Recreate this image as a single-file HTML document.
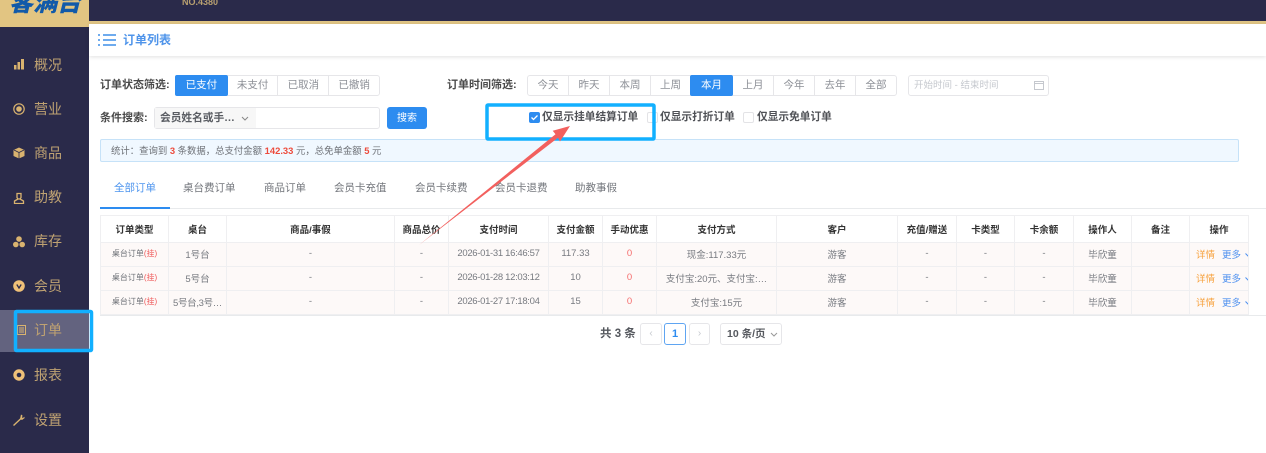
<!DOCTYPE html>
<html lang="zh"><head><meta charset="utf-8">
<style>
*{box-sizing:border-box}
html,body{margin:0;padding:0;width:1266px;height:453px;overflow:hidden;background:#fff;font-family:"Liberation Sans","Noto Sans CJK SC",sans-serif;color:#606266}
body{filter:blur(.3px)}
.a{position:absolute;white-space:nowrap}
#side{position:absolute;left:0;top:0;width:89px;height:453px;background:#2a2a4a}
#logo{position:absolute;left:0;top:0;width:89px;height:27px;background:#e2c582;overflow:hidden}
#logo span{position:absolute;left:9px;top:-14px;font:italic 900 24px/30px "Noto Sans CJK SC",sans-serif;color:#115aa9;white-space:nowrap}
#top{position:absolute;left:89px;top:0;width:1177px;height:24px;background:#2a2a4a;border-bottom:3px solid #e0c585}
.m{position:absolute;left:34px;font-size:14px;line-height:20px;color:#bfa272;white-space:nowrap}
.ic{position:absolute;left:13px;width:12px;height:12px}
#bar{position:absolute;left:89px;top:24px;width:1177px;height:32px;background:#fff;box-shadow:0 1px 4px rgba(0,0,0,.12)}
.lab{font-size:11px;font-weight:bold;color:#4a4a4a;line-height:16px}
.g{position:absolute;display:flex;height:21px;border:1px solid #e6e6e9;border-radius:3px;font-size:10.5px;line-height:19px;color:#8c8f96;background:#fff}
.g span{display:block;text-align:center;border-right:1px solid #e6e6e9}
.g span:last-child{border-right:0}
.g .on{background:#2d8cf0;color:#fff;margin:-1px 0 -1px -1px;line-height:21px;height:21px;border-radius:2px;border-right:0}
.chk{font-size:10.7px;line-height:16px;font-weight:bold;color:#4f5156}
.box{position:absolute;width:11px;height:11px;border:1px solid #e3e3e6;border-radius:2px;background:#fff}
.tab{position:absolute;top:181px;font-size:10.5px;line-height:15px;color:#72757b;white-space:nowrap}
table{position:absolute;left:100px;top:215px;width:1148px;border-collapse:collapse;table-layout:fixed;font-size:9.5px}
th,td{border:1px solid #efeff1;text-align:center;padding:0;overflow:hidden;white-space:nowrap}
th{height:27px;font-size:9.5px;color:#333;font-weight:bold;background:#fff}
td{height:24px;color:#777a80;background:#fdf9f8;padding-bottom:2px}
.sm{font-size:8px;color:#6f7278}
.sm b{font-weight:normal;color:#ef5a5a}
.r{color:#f56c6c}
.d{letter-spacing:-.32px}
.o{color:#f7a13c}.bl{color:#4d90ef;margin-left:7px}
.act{text-align:left;padding-left:6px}
.act svg{margin-left:4px;vertical-align:1px}
</style></head><body>
<div id="top"><span class="a" style="left:93px;top:-4px;font-size:9px;line-height:12px;font-weight:bold;color:#b8a070">NO.4380</span></div>
<div id="side">
<div id="logo"><span>客满台</span></div>
<div style="position:absolute;left:0;top:310px;width:89px;height:42px;background:#63637f"></div>
<svg class="ic" style="top:58px" viewBox="0 0 12 12"><path fill="#d9b36f" d="M1 7h2.500v4.500H1zM4.500 4h2.500v7.500H4.500zM8 1h3v10.500H8z"/></svg>
<div class="m" style="top:55px">概况</div>
<svg class="ic" style="top:103px" viewBox="0 0 12 12"><circle cx="6" cy="6" r="5.200" fill="none" stroke="#d9b36f" stroke-width="1.200"/><circle cx="6" cy="6" r="2.800" fill="#d9b36f"/></svg>
<div class="m" style="top:99px">营业</div>
<svg class="ic" style="top:147px" viewBox="0 0 12 12"><path fill="#d9b36f" d="M6 .5l5.500 2.500v6l-5.500 2.500-5.500-2.500V3z"/><path stroke="#2a2a4a" fill="none" stroke-width=".8" d="M1 3l5 2.500 5-2.500M6 5.500v6"/></svg>
<div class="m" style="top:143px">商品</div>
<svg class="ic" style="top:192px" viewBox="0 0 12 12"><path fill="none" stroke="#d9b36f" stroke-width="1.300" d="M4 1.500h4v4L7 7H5L4 5.500zM5 7L1.500 9v2.500h9V9L7 7"/></svg>
<div class="m" style="top:187px">助教</div>
<svg class="ic" style="top:236px" viewBox="0 0 12 12"><g fill="#d9b36f"><circle cx="6" cy="3" r="2.800"/><circle cx="2.800" cy="8.500" r="2.800"/><circle cx="9.200" cy="8.500" r="2.800"/></g></svg>
<div class="m" style="top:231px">库存</div>
<svg class="ic" style="top:280px" viewBox="0 0 12 12"><circle cx="6" cy="6" r="5.800" fill="#efc078"/><path d="M3.800 4.500L6 8l2.200-3.500" fill="none" stroke="#2a2a4a" stroke-width="1.300"/></svg>
<div class="m" style="top:276px">会员</div>
<svg class="ic" style="top:324px;left:15px" viewBox="0 0 12 12"><path fill="none" stroke="#d9b36f" d="M2.500 1.500h8v9h-8zM4 4h5M4 6h5M4 8h5"/></svg>
<div class="m" style="top:320px">订单</div>
<svg class="ic" style="top:369px" viewBox="0 0 12 12"><circle cx="6" cy="6" r="4" fill="none" stroke="#efc078" stroke-width="3.400"/></svg>
<div class="m" style="top:365px">报表</div>
<svg class="ic" style="top:414px" viewBox="0 0 12 12"><path d="M.5 11.500L8 4.500" stroke="#d9b36f" stroke-width="1.400" fill="none"/><path d="M7 5l1-4.500 1.500 1L9 3.500l1 .5 1.200-1.200.5 1.200-2.700 2z" fill="#d9b36f"/></svg>
<div class="m" style="top:410px">设置</div>
</div>

<div id="bar">
<svg class="a" style="left:9px;top:10px" width="18" height="12" viewBox="0 0 18 12"><path stroke="#3f8fe8" stroke-width="1.500" d="M0 1h2M5 1h13M0 6h2M5 6h13M0 11h2M5 11h13"/></svg>
<span class="a" style="left:34px;top:8px;font-size:12px;line-height:16px;font-weight:bold;color:#4f94ea">订单列表</span>
</div>

<span class="a lab" style="left:100px;top:77px">订单状态筛选:</span>
<div class="g" style="left:175px;top:75px;width:205px"><span class="on" style="width:53px">已支付</span><span style="width:51px">未支付</span><span style="width:51px">已取消</span><span style="width:50px">已撤销</span></div>

<span class="a lab" style="left:447px;top:77px">订单时间筛选:</span>
<div class="g" style="left:527px;top:75px;width:370px"><span style="width:41px">今天</span><span style="width:41px">昨天</span><span style="width:41px">本周</span><span style="width:40px">上周</span><span class="on" style="width:43px">本月</span><span style="width:41px">上月</span><span style="width:41px">今年</span><span style="width:41px">去年</span><span style="width:40px">全部</span></div>

<div class="g" style="left:908px;top:75px;width:141px;color:#c5c8ce;font-size:9.500px;padding-left:5px">开始时间 - 结束时间
<svg class="a" style="left:125px;top:4px" width="10" height="10" viewBox="0 0 10 10"><path fill="none" stroke="#c5c8ce" d="M.5 1.500h9v8h-9zM.5 3.500h9"/></svg></div>

<span class="a lab" style="left:100px;top:110px">条件搜索:</span>
<div class="g" style="left:154px;top:107px;width:226px;height:22px;color:#5a5d63;font-size:10.7px;line-height:20px">
<span style="width:101px;background:#f7f7f7;text-align:left;padding-left:5px;position:relative;font-weight:bold">会员姓名或手…<svg class="a" style="left:86px;top:8px" width="8" height="5" viewBox="0 0 8 5"><path d="M1 1l3 3 3-3" fill="none" stroke="#888"/></svg></span></div>
<div class="a" style="left:387px;top:107px;width:40px;height:22px;background:#2d8cf0;border-radius:3px;color:#fff;font-size:10px;line-height:23px;text-align:center">搜索</div>

<div class="box" style="left:529px;top:112px;background:#2d8cf0;border-color:#2d8cf0"></div>
<svg class="a" style="left:529px;top:112px" width="11" height="11" viewBox="0 0 11 11"><path d="M2.500 5.500l2 2 4-4" fill="none" stroke="#fff" stroke-width="1.300"/></svg>
<span class="a chk" style="left:542px;top:109px">仅显示挂单结算订单</span>
<div class="box" style="left:647px;top:112px"></div>
<span class="a chk" style="left:660px;top:109px">仅显示打折订单</span>
<div class="box" style="left:743px;top:112px"></div>
<span class="a chk" style="left:757px;top:109px">仅显示免单订单</span>

<div class="a" style="left:100px;top:139px;width:1139px;height:23px;background:#f0f8ff;border:1px solid #c6e2f8;border-radius:2px;font-size:9.400px;line-height:21px;color:#6d7076;padding-left:10px">统计：查询到 <b style="color:#ed4b3c">3</b> 条数据，总支付金额 <b style="color:#ed4b3c">142.33</b> 元，总免单金额 <b style="color:#ed4b3c">5</b> 元</div>

<span class="tab" style="left:114px;color:#4d94ee">全部订单</span>
<span class="tab" style="left:183px">桌台费订单</span>
<span class="tab" style="left:264px">商品订单</span>
<span class="tab" style="left:334px">会员卡充值</span>
<span class="tab" style="left:415px">会员卡续费</span>
<span class="tab" style="left:495px">会员卡退费</span>
<span class="tab" style="left:575px">助教事假</span>
<div class="a" style="left:100px;top:208px;width:1166px;height:1px;background:#e8eaec"></div>
<div class="a" style="left:100px;top:207px;width:70px;height:2px;background:#2d8cf0"></div>

<table>
<colgroup><col style="width:68px"><col style="width:58px"><col style="width:168px"><col style="width:54px"><col style="width:100px"><col style="width:54px"><col style="width:54px"><col style="width:120px"><col style="width:121px"><col style="width:59px"><col style="width:58px"><col style="width:59px"><col style="width:58px"><col style="width:58px"><col style="width:59px"></colgroup>
<tr><th>订单类型</th><th>桌台</th><th>商品/事假</th><th>商品总价</th><th>支付时间</th><th>支付金额</th><th>手动优惠</th><th>支付方式</th><th>客户</th><th>充值/赠送</th><th>卡类型</th><th>卡余额</th><th>操作人</th><th>备注</th><th>操作</th></tr>
<tr><td class="sm">桌台订单<b>(挂)</b></td><td>1号台</td><td>-</td><td>-</td><td class="d">2026-01-31 16:46:57</td><td>117.33</td><td class="r">0</td><td>现金:117.33元</td><td>游客</td><td>-</td><td>-</td><td>-</td><td>毕欣童</td><td></td><td class="act"><span class="o">详情</span><span class="bl">更多</span><svg width="6" height="4" viewBox="0 0 6 4"><path d="M.5.500L3 3l2.500-2.500" fill="none" stroke="#4d90ef"/></svg></td></tr>
<tr><td class="sm">桌台订单<b>(挂)</b></td><td>5号台</td><td>-</td><td>-</td><td class="d">2026-01-28 12:03:12</td><td>10</td><td class="r">0</td><td>支付宝:20元、支付宝:…</td><td>游客</td><td>-</td><td>-</td><td>-</td><td>毕欣童</td><td></td><td class="act"><span class="o">详情</span><span class="bl">更多</span><svg width="6" height="4" viewBox="0 0 6 4"><path d="M.5.500L3 3l2.500-2.500" fill="none" stroke="#4d90ef"/></svg></td></tr>
<tr><td class="sm">桌台订单<b>(挂)</b></td><td class="d">5号台,3号…</td><td>-</td><td>-</td><td class="d">2026-01-27 17:18:04</td><td>15</td><td class="r">0</td><td>支付宝:15元</td><td>游客</td><td>-</td><td>-</td><td>-</td><td>毕欣童</td><td></td><td class="act"><span class="o">详情</span><span class="bl">更多</span><svg width="6" height="4" viewBox="0 0 6 4"><path d="M.5.500L3 3l2.500-2.500" fill="none" stroke="#4d90ef"/></svg></td></tr>
</table>
<div class="a" style="left:100px;top:315px;width:1166px;height:1px;background:#e8eaec"></div>

<span class="a" style="left:600px;top:326px;font-size:11.500px;line-height:16px;font-weight:bold;color:#55585e">共 3 条</span>
<div class="a" style="left:640px;top:323px;width:22px;height:22px;border:1px solid #e6e6e9;border-radius:3px;color:#c5c8ce;font-size:10px;line-height:20px;text-align:center">‹</div>
<div class="a" style="left:664px;top:323px;width:22px;height:22px;border:1px solid #5fa5f2;border-radius:3px;color:#2d8cf0;font-size:11px;font-weight:bold;line-height:20px;text-align:center">1</div>
<div class="a" style="left:689px;top:323px;width:21px;height:22px;border:1px solid #e6e6e9;border-radius:3px;color:#c5c8ce;font-size:10px;line-height:20px;text-align:center">›</div>
<div class="a" style="left:720px;top:323px;width:62px;height:22px;border:1px solid #e6e6e9;border-radius:3px;color:#55585e;font-size:10.500px;font-weight:bold;line-height:21px;padding-left:6px">10 条/页<svg class="a" style="left:49px;top:8px" width="8" height="5" viewBox="0 0 8 5"><path d="M1 1l3 3 3-3" fill="none" stroke="#999"/></svg></div>

<svg class="a" style="left:0;top:0" width="1266" height="453" viewBox="0 0 1266 453">
<rect x="15.500" y="311.500" width="76" height="39" rx="1" fill="none" stroke="#12b0ff" stroke-width="3.500"/>
<rect x="487" y="105" width="167" height="34" rx="1" fill="none" stroke="#12b0ff" stroke-width="3.500"/>
<path d="M570 126L552.700 130.700L555.500 134.300L419 245L558 137.800L560 141.500z" fill="#f2605e"/>
</svg>
</body></html>
